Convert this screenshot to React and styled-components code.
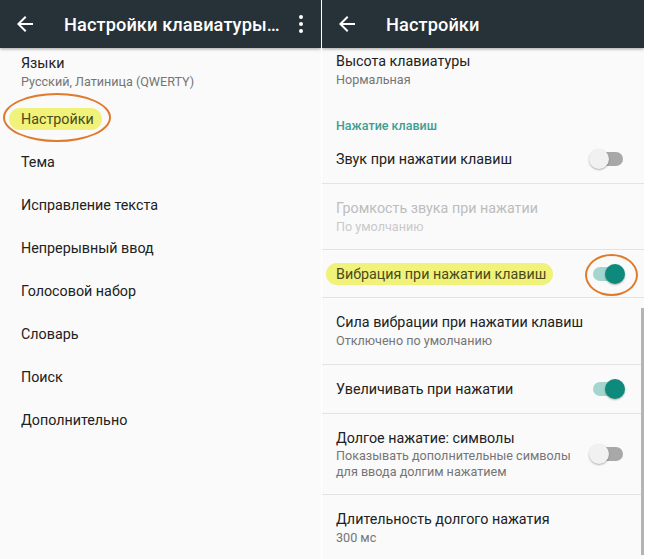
import React from 'react'
import styled, { createGlobalStyle } from 'styled-components'

const GlobalStyle = createGlobalStyle`
  html, body {
    margin: 0;
    padding: 0;
    background: #ffffff;
  }
  body {
    font-family: Roboto, "Noto Sans", "Liberation Sans", sans-serif;
    -webkit-font-smoothing: antialiased;
  }
`;

const Page = styled.div`
  display: flex;
  gap: 1px;
  width: 650px;
  height: 559px;
  overflow: hidden;
  background: #ffffff;
`;

const Screen = styled.div`
  position: relative;
  width: ${p => p.$width}px;
  height: 559px;
  background: #fafafa;
  overflow: hidden;
`;

const Toolbar = styled.div`
  position: relative;
  z-index: 2;
  display: flex;
  align-items: center;
  height: 48px;
  background: #263238;
  box-shadow: 0 1px 3px rgba(0, 0, 0, 0.35);
`;

const BackButton = styled.div`
  display: flex;
  width: 24px;
  height: 24px;
  margin-left: 13px;
`;

const ToolbarTitle = styled.div`
  flex: 1;
  margin-left: 27px;
  color: #ffffff;
  font-size: 18.2px;
  font-weight: 500;
  white-space: nowrap;
  letter-spacing: 0.1px;
`;

const MenuButton = styled.div`
  display: flex;
  width: 24px;
  height: 24px;
  margin-right: 8px;
`;

const List = styled.div`
  display: flex;
  flex-direction: column;
  padding-left: ${p => p.$inset}px;
`;

const Row = styled.div`
  position: relative;
  display: flex;
  align-items: ${p => (p.$top ? 'flex-start' : 'center')};
  height: ${p => p.$h}px;
  padding-top: ${p => p.$pt || 0}px;
  padding-right: 19px;
  box-sizing: border-box;
  border-bottom: ${p => (p.$line ? '1px solid #e3e3e3' : 'none')};
  margin-left: ${p => (p.$line ? -p.$inset : 0)}px;
  padding-left: ${p => (p.$line ? p.$inset : 0)}px;
`;

const TextBox = styled.div`
  flex: 1;
  display: flex;
  flex-direction: column;
`;

const Title = styled.div`
  font-size: 14.3px;
  line-height: 20px;
  color: ${p => (p.$disabled ? '#bdbdbd' : '#212121')};
  white-space: nowrap;
`;

const Summary = styled.div`
  font-size: 12.6px;
  line-height: ${p => p.$lh || 18}px;
  color: ${p => (p.$disabled ? '#c9c9c9' : '#757575')};
`;

const Category = styled.div`
  display: flex;
  align-items: flex-start;
  height: 31px;
  padding-top: 14px;
  box-sizing: border-box;
  font-size: 12.5px;
  line-height: 16px;
  font-weight: 500;
  color: #3f9d91;
`;

const Highlight = styled.span`
  display: inline-block;
  margin-left: ${p => -p.$l}px;
  padding: 1px ${p => p.$r}px 1px ${p => p.$l}px;
  background: #f0f27a;
  border-radius: 11px;
  color: #4a4a1a;
`;

const Ring = styled.div`
  position: absolute;
  left: ${p => p.$x}px;
  top: ${p => p.$y}px;
  width: ${p => p.$w}px;
  height: ${p => p.$h}px;
  border: 2.5px solid #e07a2c;
  border-radius: 50%;
  box-sizing: border-box;
  pointer-events: none;
`;

const SwitchWrap = styled.div`
  position: relative;
  width: 36px;
  height: 20px;
  flex: none;
`;

const Track = styled.div`
  position: absolute;
  left: 4px;
  right: 2px;
  top: 3px;
  height: 14px;
  border-radius: 7px;
  background: ${p => (p.$on ? '#a3d6cf' : '#a8a8a8')};
`;

const Thumb = styled.div`
  position: absolute;
  top: 0;
  left: ${p => (p.$on ? 16 : 0)}px;
  width: 20px;
  height: 20px;
  border-radius: 50%;
  background: ${p => (p.$on ? '#0d8a7c' : '#f1f1f1')};
  box-shadow: 0 1px 2px rgba(0, 0, 0, 0.3);
`;

const Scrollbar = styled.div`
  position: absolute;
  right: 0;
  top: 308px;
  width: 3px;
  height: 247px;
  background: #b4b4b4;
`;

const BackIcon = () => (
  <svg width="24" height="24" viewBox="0 0 24 24">
    <path fill="#ffffff" d="M20 11H7.83l5.59-5.59L12 4l-8 8 8 8 1.41-1.41L7.83 13H20v-2z" />
  </svg>
)

const MoreIcon = () => (
  <svg width="24" height="24" viewBox="0 0 24 24">
    <circle cx="12" cy="5" r="2" fill="#ffffff" />
    <circle cx="12" cy="12" r="2" fill="#ffffff" />
    <circle cx="12" cy="19" r="2" fill="#ffffff" />
  </svg>
)

const Switch = ({ on, ring }) => (
  <SwitchWrap>
    <Track $on={on} />
    <Thumb $on={on} />
    {ring && <Ring $x={-4} $y={-10} $w={53} $h={42} />}
  </SwitchWrap>
)

const leftItems = ['Тема', 'Исправление текста', 'Непрерывный ввод', 'Голосовой набор', 'Словарь', 'Поиск', 'Дополнительно']

const App = () => {
  return (
    <Page>
      <GlobalStyle />
      <Screen $width={321}>
        <Toolbar>
          <BackButton><BackIcon /></BackButton>
          <ToolbarTitle>Настройки клавиатуры…</ToolbarTitle>
          <MenuButton><MoreIcon /></MenuButton>
        </Toolbar>
        <List $inset={21}>
          <Row $h={49} $top $pt={5}>
            <TextBox>
              <Title>Языки</Title>
              <Summary>Русский, Латиница (QWERTY)</Summary>
            </TextBox>
          </Row>
          <Row $h={43}>
            <Title>
              <Highlight $l={12} $r={8}>Настройки</Highlight>
            </Title>
            <Ring $x={-18} $y={-4} $w={108} $h={49} />
          </Row>
          {leftItems.map(t => (
            <Row key={t} $h={43}>
              <Title>{t}</Title>
            </Row>
          ))}
        </List>
      </Screen>

      <Screen $width={322}>
        <Toolbar>
          <BackButton><BackIcon /></BackButton>
          <ToolbarTitle>Настройки</ToolbarTitle>
        </Toolbar>
        <List $inset={14}>
          <Row $h={56} $top $pt={3}>
            <TextBox>
              <Title>Высота клавиатуры</Title>
              <Summary>Нормальная</Summary>
            </TextBox>
          </Row>
          <Category>Нажатие клавиш</Category>
          <Row $h={49} $line $inset={14}>
            <TextBox><Title>Звук при нажатии клавиш</Title></TextBox>
            <Switch />
          </Row>
          <Row $h={66} $line $inset={14}>
            <TextBox>
              <Title $disabled>Громкость звука при нажатии</Title>
              <Summary $disabled>По умолчанию</Summary>
            </TextBox>
          </Row>
          <Row $h={48} $line $inset={14}>
            <TextBox>
              <Title><Highlight $l={10} $r={7}>Вибрация при нажатии клавиш</Highlight></Title>
            </TextBox>
            <Switch on ring />
          </Row>
          <Row $h={67} $line $inset={14}>
            <TextBox>
              <Title>Сила вибрации при нажатии клавиш</Title>
              <Summary>Отключено по умолчанию</Summary>
            </TextBox>
          </Row>
          <Row $h={49} $line $inset={14}>
            <TextBox><Title>Увеличивать при нажатии</Title></TextBox>
            <Switch on />
          </Row>
          <Row $h={81} $line $inset={14}>
            <TextBox>
              <Title>Долгое нажатие: символы</Title>
              <Summary $lh={16}>Показывать дополнительные символы<br />для ввода долгим нажатием</Summary>
            </TextBox>
            <Switch />
          </Row>
          <Row $h={64} $top $pt={14}>
            <TextBox>
              <Title>Длительность долгого нажатия</Title>
              <Summary>300 мс</Summary>
            </TextBox>
          </Row>
        </List>
        <Scrollbar />
      </Screen>
    </Page>
  )
}

export default App
